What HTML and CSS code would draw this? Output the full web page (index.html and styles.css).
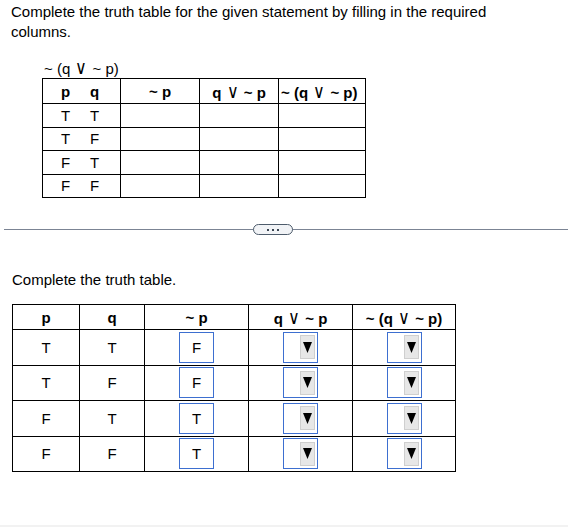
FILE: index.html
```html
<!DOCTYPE html>
<html>
<head>
<meta charset="utf-8">
<link rel="stylesheet" href="styles.css">
</head>
<body>
<div class="page">
  <p class="title">Complete the truth table for the given statement by filling in the required columns.</p>
  <div class="given">
    <div class="formula">~ (q <span class="or">∨</span> ~ p)</div>
    <table class="t1">
      <colgroup><col class="c1"><col class="c2"><col class="c3"><col class="c4"></colgroup>
      <tr class="head">
        <th><span class="pair"><span>p</span><span>q</span></span></th>
        <th>~ p</th>
        <th>q <span class="or">∨</span> ~ p</th>
        <th>~ (q <span class="or">∨</span> ~ p)</th>
      </tr>
      <tr><td><span class="pair"><span>T</span><span>T</span></span></td><td></td><td></td><td></td></tr>
      <tr><td><span class="pair"><span>T</span><span>F</span></span></td><td></td><td></td><td></td></tr>
      <tr><td><span class="pair"><span>F</span><span>T</span></span></td><td></td><td></td><td></td></tr>
      <tr><td><span class="pair"><span>F</span><span>F</span></span></td><td></td><td></td><td></td></tr>
    </table>
  </div>

  <div class="divider">
    <span class="pill"><i></i><i></i><i></i></span>
  </div>

  <p class="sub">Complete the truth table.</p>
  <table class="t2">
    <colgroup><col class="d1"><col class="d2"><col class="d3"><col class="d4"><col class="d5"></colgroup>
    <tr class="head">
      <th>p</th><th>q</th><th>~ p</th><th>q <span class="or">∨</span> ~ p</th><th>~ (q <span class="or">∨</span> ~ p)</th>
    </tr>
    <tr>
      <td>T</td><td>T</td><td><span class="box">F</span></td>
      <td><span class="dd"><span class="btn"><svg width="9" height="11" viewBox="0 0 9 11"><polygon points="0,0 9,0 4.5,11" fill="#000"/></svg></span></span></td>
      <td><span class="dd"><span class="btn"><svg width="9" height="11" viewBox="0 0 9 11"><polygon points="0,0 9,0 4.5,11" fill="#000"/></svg></span></span></td>
    </tr>
    <tr>
      <td>T</td><td>F</td><td><span class="box">F</span></td>
      <td><span class="dd"><span class="btn"><svg width="9" height="11" viewBox="0 0 9 11"><polygon points="0,0 9,0 4.5,11" fill="#000"/></svg></span></span></td>
      <td><span class="dd"><span class="btn"><svg width="9" height="11" viewBox="0 0 9 11"><polygon points="0,0 9,0 4.5,11" fill="#000"/></svg></span></span></td>
    </tr>
    <tr>
      <td>F</td><td>T</td><td><span class="box">T</span></td>
      <td><span class="dd"><span class="btn"><svg width="9" height="11" viewBox="0 0 9 11"><polygon points="0,0 9,0 4.5,11" fill="#000"/></svg></span></span></td>
      <td><span class="dd"><span class="btn"><svg width="9" height="11" viewBox="0 0 9 11"><polygon points="0,0 9,0 4.5,11" fill="#000"/></svg></span></span></td>
    </tr>
    <tr>
      <td>F</td><td>F</td><td><span class="box">T</span></td>
      <td><span class="dd"><span class="btn"><svg width="9" height="11" viewBox="0 0 9 11"><polygon points="0,0 9,0 4.5,11" fill="#000"/></svg></span></span></td>
      <td><span class="dd"><span class="btn"><svg width="9" height="11" viewBox="0 0 9 11"><polygon points="0,0 9,0 4.5,11" fill="#000"/></svg></span></span></td>
    </tr>
  </table>
</div>
<div class="footer"></div>
</body>
</html>
```
FILE: styles.css
```css
html, body {
  margin: 0;
  padding: 0;
  background: #fff;
}
body {
  font-family: "Liberation Sans", Arial, sans-serif;
  color: #000;
  width: 568px;
  height: 527px;
  position: relative;
  overflow: hidden;
}
.page {
  padding-top: 2px;
}
.title {
  margin: 0;
  padding: 0 60px 0 11px;
  font-size: 15px;
  line-height: 20px;
}
.or {
  font-family: "Liberation Sans", Arial, sans-serif;
  font-size: 19px;
  font-weight: normal;
  line-height: 1;
  display: inline-block;
  transform: scaleX(0.85);
  margin: 0 0;
}
.given {
  margin-top: 16px;
  padding-left: 42px;
}
.formula {
  padding-left: 2px;
  font-size: 15px;
  line-height: 18px;
  height: 20px;
}
table {
  border-collapse: collapse;
  table-layout: fixed;
}
.t1 {
  width: 323px;
}
.t1 .c1 { width: 78px; }
.t1 .c2 { width: 79px; }
.t1 .c3 { width: 79px; }
.t1 .c4 { width: 87px; }
.t1 th, .t1 td {
  border: 1px solid #000;
  padding: 0;
  font-size: 15px;
  text-align: center;
  height: 22.5px;
}
.t1 .head th {
  height: 24px;
  font-weight: bold;
}
.t1 th:nth-child(4) {
  text-align: left;
  padding-left: 2px;
  white-space: nowrap;
}
.pair {
  display: flex;
  justify-content: center;
  gap: 19px;
  padding-right: 3px;
}
.pair span {
  width: 10px;
  text-align: center;
}
.divider {
  margin-top: 31px;
  margin-left: 4px;
  height: 1px;
  background: #7b8494;
  display: flex;
  justify-content: center;
  align-items: center;
  padding-right: 26px;
}
.pill {
  width: 38px;
  height: 9px;
  border: 1px solid #4d5b6b;
  border-radius: 6px;
  background: #f1f3f6;
  display: flex;
  justify-content: center;
  align-items: center;
  gap: 3px;
}
.pill i {
  width: 2px;
  height: 2px;
  background: #3a4552;
  display: block;
}
.sub {
  margin: 40px 0 0;
  padding-left: 12px;
  font-size: 15px;
  line-height: 20px;
}
.t2 {
  margin-left: 12px;
  margin-top: 14px;
  width: 443px;
}
.t2 .d1 { width: 67px; }
.t2 .d2 { width: 65px; }
.t2 .d3 { width: 104px; }
.t2 .d4 { width: 104px; }
.t2 .d5 { width: 103px; }
.t2 th, .t2 td {
  border: 1px solid #000;
  padding: 0;
  font-size: 15px;
  text-align: center;
  vertical-align: middle;
  height: 34.5px;
}
.t2 .head th {
  height: 24px;
  font-weight: bold;
}
.box, .dd {
  display: inline-flex;
  box-sizing: border-box;
  width: 35px;
  height: 31px;
  border: 1px solid #3d6fd0;
  vertical-align: middle;
}
.box {
  justify-content: center;
  align-items: center;
  font-size: 15px;
}
.dd {
  justify-content: flex-end;
  align-items: center;
  padding-right: 2px;
}
.btn {
  box-sizing: border-box;
  width: 15px;
  height: 24px;
  background: #e7e7e7;
  border: 1px solid #cfcfcf;
  display: flex;
  justify-content: center;
  align-items: center;
}
.footer {
  position: absolute;
  left: 0;
  right: 0;
  bottom: 0;
  height: 2px;
  background: #f2f2f2;
}
```
